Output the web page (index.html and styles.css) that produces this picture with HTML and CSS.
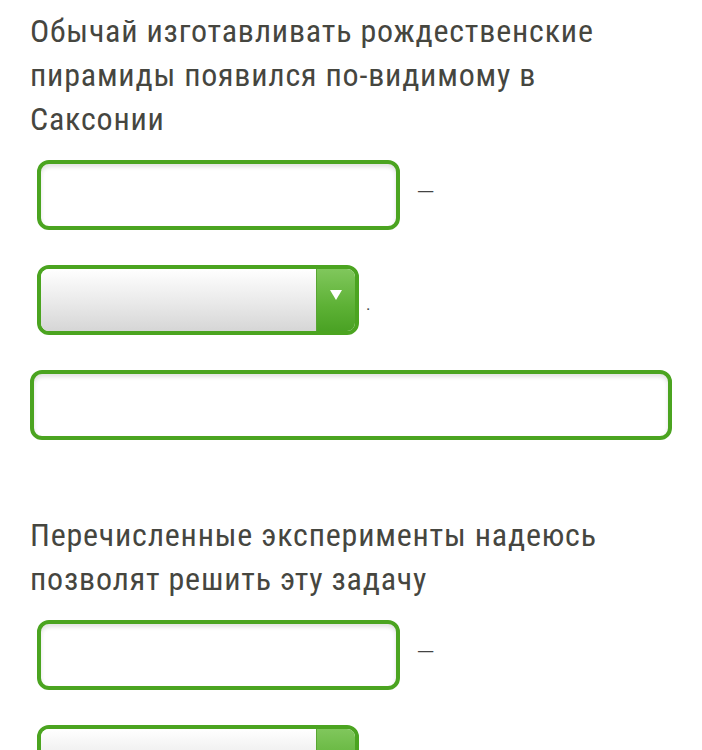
FILE: index.html
```html
<!DOCTYPE html>
<html>
<head>
  <meta charset="UTF-8">
  <title>Задание</title>
  <link rel="stylesheet" href="styles.css">
</head>
<body>
  <div class="task">
    <p class="question">Обычай изготавливать рождественские пирамиды появился по-видимому в Саксонии</p>
    <div class="field-row">
      <input type="text" class="field">
      <span class="sep">—</span>
    </div>
    <div class="field-row">
      <div class="select-wrap">
        <select class="select"></select>
        <span class="select-btn"><span class="arrow"></span></span>
      </div>
      <span class="sep dot">.</span>
    </div>
    <input type="text" class="field wide">
  </div>

  <div class="task">
    <p class="question">Перечисленные эксперименты надеюсь позволят решить эту задачу</p>
    <div class="field-row">
      <input type="text" class="field">
      <span class="sep">—</span>
    </div>
    <div class="field-row">
      <div class="select-wrap">
        <select class="select"></select>
        <span class="select-btn"><span class="arrow"></span></span>
      </div>
      <span class="sep dot">.</span>
    </div>
    <input type="text" class="field wide">
  </div>
</body>
</html>
```
FILE: styles.css
```css
body {
  margin: 0;
  padding: 9px 30px 0 30px;
  background: #fff;
  font-family: "Roboto Condensed", Roboto, sans-serif;
  color: #46463f;
}
.task {
  margin-bottom: 73px;
}
.question {
  margin: 0 0 19px 0;
  font-size: 32px;
  line-height: 44px;
  letter-spacing: 0.8px;
}
.field-row {
  display: flex;
  align-items: center;
  margin-bottom: 35px;
  padding-left: 7px;
}
.field {
  box-sizing: border-box;
  width: 363px;
  height: 70px;
  margin: 0;
  border: 4px solid #4ba420;
  border-radius: 12px;
  background: #fff;
  box-shadow: inset 0 3px 4px rgba(0, 0, 0, 0.12);
  outline: none;
}
.field.wide {
  display: block;
  width: 100%;
}
.sep {
  margin-left: 16px;
  margin-bottom: 4px;
  font-size: 28px;
  font-weight: 300;
  line-height: 1;
  color: #444;
}
.sep.dot {
  margin-left: 7px;
  margin-top: 8px;
  margin-bottom: 0;
  font-size: 17px;
  font-weight: 400;
}
.select-wrap {
  box-sizing: border-box;
  display: flex;
  width: 322px;
  height: 70px;
  border: 4px solid #4ba420;
  border-radius: 12px;
  overflow: hidden;
}
.select {
  flex: 1;
  margin: 0;
  border: none;
  -webkit-appearance: none;
  appearance: none;
  background: linear-gradient(#ffffff, #e9e9e9 55%, #d6d6d6);
  outline: none;
}
.select-btn {
  width: 39px;
  display: flex;
  justify-content: center;
  padding-top: 21px;
  box-sizing: border-box;
  background: linear-gradient(#80c75c, #5db135 60%, #4aa224);
  border-left: 1px solid #58a632;
}
.arrow {
  width: 0;
  height: 0;
  border-left: 6px solid transparent;
  border-right: 6px solid transparent;
  border-top: 10px solid #fff;
}
```
